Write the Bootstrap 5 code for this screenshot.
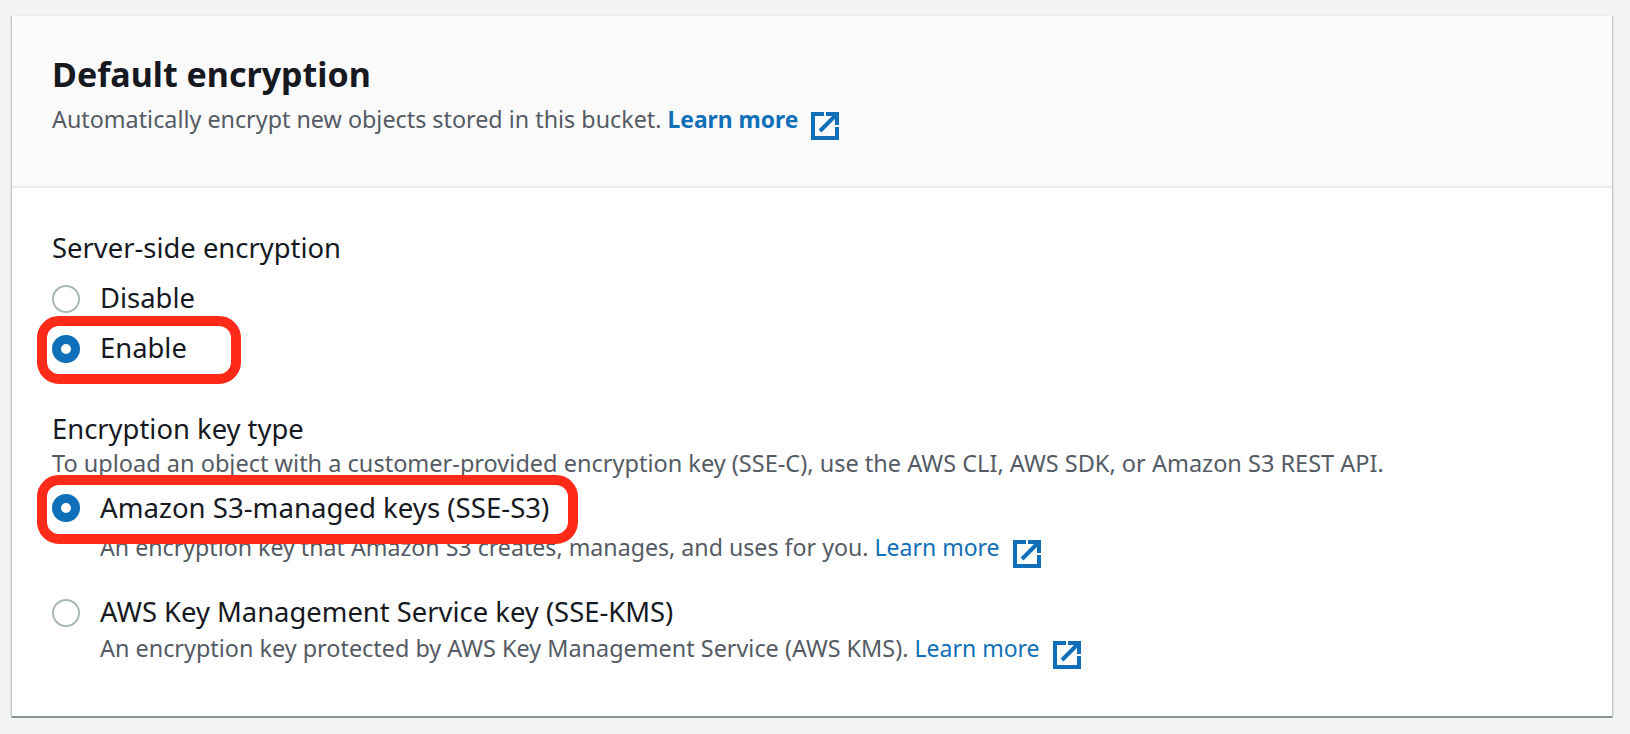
<!DOCTYPE html>
<html lang="en">
<head>
    <meta charset="UTF-8">
    <title>Default encryption</title>
    <link href="https://cdn.jsdelivr.net/npm/bootstrap@5.3.0/dist/css/bootstrap.min.css" rel="stylesheet">
    <style>
        body {
            background: #f2f3f3;
            font-family: "Noto Sans", "Liberation Sans", sans-serif;
            color: #16191f;
            font-size: 27.4px;
            line-height: 36px;
        }
        .enc-panel {
            margin: 16px 18px 0 12px;
            border: 0;
            border-bottom: 2px solid #87949a;
            border-radius: 0;
            background: #fff;
            box-shadow: 0 -1px 0 #eaeded, 0 1px 0 #c3cacd, 1px 0 0 #c3cacd, 2px 0 0 #dfe3e4, -1px 0 0 #c3cacd, -2px 0 0 #dfe3e4;
        }
        .enc-head {
            height: 172px;
            padding: 40px 40px 0;
            background: #fafafa;
            border-bottom: 2px solid #eaeded;
            border-radius: 0;
        }
        .enc-title {
            font-size: 34px;
            line-height: 36px;
            font-weight: 700;
            margin: 0 0 11px;
        }
        .enc-note {
            font-size: 23.4px;
            line-height: 32px;
            color: #545b64;
        }
        .note-head { font-size: 23.32px; }
        .note-wide { font-size: 23.52px; }
        .note-s3 { font-size: 23.18px; }
        .enc-note a {
            font-size: 23px;
            line-height: 1;
            color: #0f6fb8;
            text-decoration: none;
        }
        .enc-note a.strong-link { font-size: 22.8px; font-weight: 700; }
        .ext-icon {
            width: 28px;
            height: 28px;
            margin: -8px 0 -8px 7px;
            vertical-align: -4px;
            fill: none;
            stroke: #0f6fb8;
            stroke-width: 4;
        }
        .enc-body { padding: 42px 40px 52px; }
        .radio-row {
            position: relative;
            display: flex;
            align-items: center;
            gap: 20px;
            min-height: 50px;
            margin: 0;
            padding: 0;
        }
        .radio-row.tight { min-height: 36px; }
        .radio-text { line-height: 34px; padding-bottom: 2px; }
        .label-s3 { font-size: 27.6px; }
        .radio-row .form-check-input {
            width: 28px;
            height: 28px;
            margin: 0;
            float: none;
            flex: none;
            border: 2px solid #aab7b8;
            background: #fff;
        }
        .radio-row .form-check-input:checked {
            border: 9px solid #0f6fb8;
            background: #fff;
        }
        .radio-note { padding-left: 48px; }
        .gap-group { margin-top: 8px; }
        .gap-key { margin-top: 37px; }
        .gap-s3 { margin-top: 11px; }
        .gap-s3-note { margin-top: 5px; }
        .gap-kms { margin-top: 32px; }
        .gap-kms-note { margin-top: 1px; }
        .red-box {
            position: absolute;
            border: 10px solid #ff2a17;
            border-radius: 22px;
            pointer-events: none;
        }
        .red-enable { left: -15px; top: -8px; width: 204px; height: 68px; }
        .red-s3 { left: -15px; top: -15px; width: 541px; height: 69px; }
    </style>
</head>
<body>
    <div class="card enc-panel">
        <div class="card-header enc-head">
            <h2 class="enc-title">Default encryption</h2>
            <div class="enc-note note-head">
                Automatically encrypt new objects stored in this bucket.
                <a class="strong-link" href="#">Learn more</a>
                <svg class="ext-icon" viewBox="0 0 28 28"><path d="M13 2H2v24h24V15M15 2h11v11M25 3 9 19"/></svg>
            </div>
        </div>
        <div class="card-body enc-body">
            <div>Server-side encryption</div>
            <div class="gap-group">
                <label class="form-check radio-row">
                    <input class="form-check-input" type="radio" name="sse">
                    <span class="radio-text">Disable</span>
                </label>
                <label class="form-check radio-row">
                    <input class="form-check-input" type="radio" name="sse" checked>
                    <span class="radio-text">Enable</span>
                    <span class="red-box red-enable"></span>
                </label>
            </div>

            <div class="gap-key">Encryption key type</div>
            <div class="enc-note note-wide">To upload an object with a customer-provided encryption key (SSE-C), use the AWS CLI, AWS SDK, or Amazon S3 REST API.</div>

            <label class="form-check radio-row tight gap-s3">
                <input class="form-check-input" type="radio" name="keytype" checked>
                <span class="radio-text label-s3">Amazon S3-managed keys (SSE-S3)</span>
                <span class="red-box red-s3"></span>
            </label>
            <div class="enc-note note-s3 radio-note gap-s3-note">
                An encryption key that Amazon S3 creates, manages, and uses for you.
                <a href="#">Learn more</a>
                <svg class="ext-icon" viewBox="0 0 28 28"><path d="M13 2H2v24h24V15M15 2h11v11M25 3 9 19"/></svg>
            </div>

            <label class="form-check radio-row tight gap-kms">
                <input class="form-check-input" type="radio" name="keytype">
                <span class="radio-text">AWS Key Management Service key (SSE-KMS)</span>
            </label>
            <div class="enc-note radio-note gap-kms-note">
                An encryption key protected by AWS Key Management Service (AWS KMS).
                <a href="#">Learn more</a>
                <svg class="ext-icon" viewBox="0 0 28 28"><path d="M13 2H2v24h24V15M15 2h11v11M25 3 9 19"/></svg>
            </div>
        </div>
    </div>
    <script src="https://cdn.jsdelivr.net/npm/bootstrap@5.3.0/dist/js/bootstrap.bundle.min.js"></script>
</body>
</html>
